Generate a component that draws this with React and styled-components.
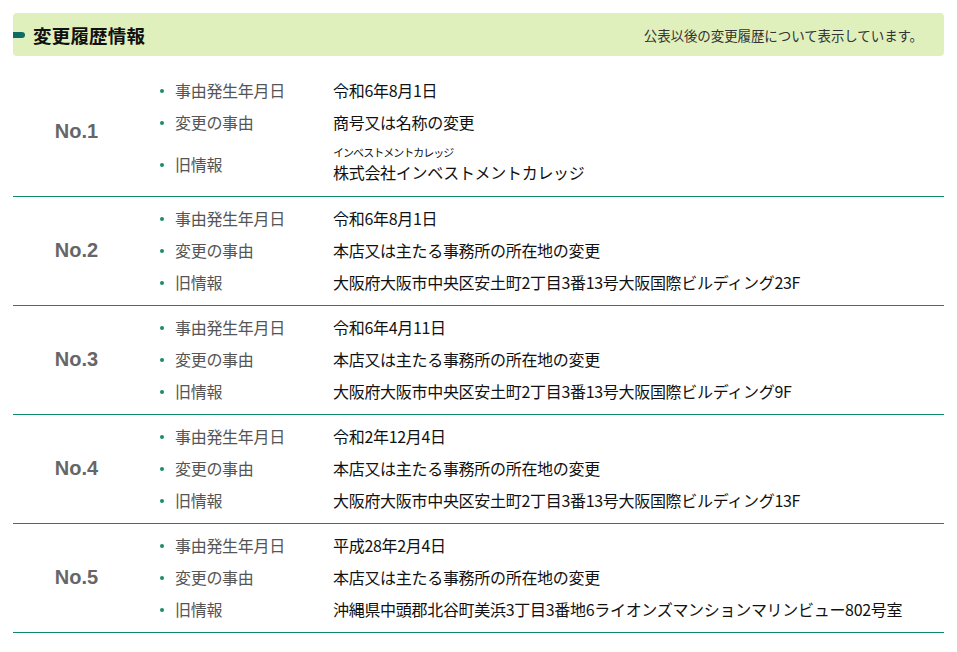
import React from 'react';
import styled, { createGlobalStyle } from 'styled-components';

const GlobalStyle = createGlobalStyle`
  html, body {
    margin: 0;
    padding: 0;
    background: #fff;
  }
  body {
    font-family: "Noto Sans CJK JP", "Liberation Sans", sans-serif;
    color: #111;
  }
`;

const Page = styled.div`
  width: 931px;
  padding: 13px 0 0 13px;
`;

const Header = styled.div`
  height: 43px;
  background: #dff0bd;
  border-radius: 4px;
  display: flex;
  align-items: center;
  justify-content: space-between;
  padding-right: 21px;
  margin-bottom: 13px;
`;

const Title = styled.h2`
  margin: 0;
  display: flex;
  align-items: center;
  font-size: 18.5px;
  font-weight: 700;
  color: #111;
  letter-spacing: 0.2px;

  &::before {
    content: '';
    width: 12px;
    height: 6px;
    margin-right: 8px;
    border-radius: 0 3px 3px 0;
    background: #0f6c63;
  }
`;

const Note = styled.p`
  margin: 0;
  font-size: 13.5px;
  letter-spacing: -0.1px;
  color: #333;
`;

const Row = styled.section`
  display: flex;
  align-items: center;
  padding: 5px 0 7px;
  border-bottom: 1px solid #0d8a68;
`;

const NoCell = styled.div`
  width: 127px;
  flex: none;
  text-align: center;
  font-family: "Liberation Sans", Arial, sans-serif;
  font-weight: 700;
  font-size: 20px;
  color: #666;
`;

const Items = styled.dl`
  margin: 0;
  flex: 1;
  display: grid;
  grid-template-columns: 193px 1fr;
  align-items: center;
`;

const Term = styled.dt`
  position: relative;
  padding-left: 35px;
  font-size: 16px;
  letter-spacing: -0.3px;
  line-height: 32px;
  color: #555;

  &::before {
    content: '';
    position: absolute;
    left: 20px;
    top: 15px;
    width: 4px;
    height: 4px;
    border-radius: 50%;
    background: #1a8c6e;
  }
`;

const Value = styled.dd`
  margin: 0;
  font-size: 16px;
  letter-spacing: -0.3px;
  line-height: ${(p) => (p.$kana ? '24px' : '32px')};
  padding: ${(p) => (p.$kana ? '6px 0 5px' : '0')};
  color: #111;
`;

const Kana = styled.span`
  display: block;
  font-size: 11px;
  line-height: 16px;
  letter-spacing: -1px;
`;

const history = [
  {
    no: 1,
    date: '令和6年8月1日',
    reason: '商号又は名称の変更',
    kana: 'インベストメントカレッジ',
    old: '株式会社インベストメントカレッジ',
  },
  {
    no: 2,
    date: '令和6年8月1日',
    reason: '本店又は主たる事務所の所在地の変更',
    old: '大阪府大阪市中央区安土町2丁目3番13号大阪国際ビルディング23F',
  },
  {
    no: 3,
    date: '令和6年4月11日',
    reason: '本店又は主たる事務所の所在地の変更',
    old: '大阪府大阪市中央区安土町2丁目3番13号大阪国際ビルディング9F',
  },
  {
    no: 4,
    date: '令和2年12月4日',
    reason: '本店又は主たる事務所の所在地の変更',
    old: '大阪府大阪市中央区安土町2丁目3番13号大阪国際ビルディング13F',
  },
  {
    no: 5,
    date: '平成28年2月4日',
    reason: '本店又は主たる事務所の所在地の変更',
    old: '沖縄県中頭郡北谷町美浜3丁目3番地6ライオンズマンションマリンビュー802号室',
  },
];

export default function App() {
  return (
    <>
      <GlobalStyle />
      <Page>
        <Header>
          <Title>変更履歴情報</Title>
          <Note>公表以後の変更履歴について表示しています。</Note>
        </Header>
        {history.map((h) => (
          <Row key={h.no}>
            <NoCell>No.{h.no}</NoCell>
            <Items>
              <Term>事由発生年月日</Term>
              <Value>{h.date}</Value>
              <Term>変更の事由</Term>
              <Value>{h.reason}</Value>
              <Term>旧情報</Term>
              <Value $kana={!!h.kana}>
                {h.kana && <Kana>{h.kana}</Kana>}
                {h.old}
              </Value>
            </Items>
          </Row>
        ))}
      </Page>
    </>
  );
}
